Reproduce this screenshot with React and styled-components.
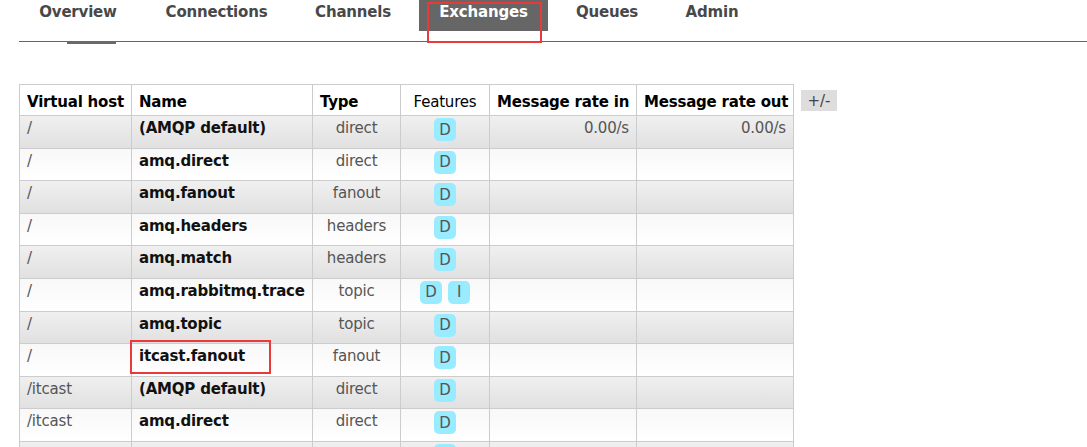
import { createGlobalStyle, styled } from "styled-components";

const GlobalStyle = createGlobalStyle`
    html, body {
        margin: 0;
        padding: 0;
        background: #fff;
        overflow: hidden;
    }
    body {
        font-family: "DejaVu Sans", Verdana, sans-serif;
        font-size: 15px;
        color: #484848;
    }
`

const Page = styled.div`
    width: 1087px;
`
const TabBar = styled.ul`
    display: flex;
    gap: 9px;
    list-style: none;
    margin: 0;
    padding: 0 0 0 19px;
    height: 41px;
`
const Tab = styled.li`
    position: relative;
    box-sizing: border-box;
    width: ${props => props.$width}px;
    height: 31px;
    display: flex;
    justify-content: center;
    padding-top: 3px;
    font-weight: bold;
    font-size: 15px;
    color: ${props => props.$active ? "#fff" : "#484848"};
    background: ${props => props.$active ? "#666" : "transparent"};
    letter-spacing: -0.2px;
`
const Highlight = styled.div`
    position: absolute;
    left: ${props => props.$left}px;
    top: ${props => props.$top}px;
    width: ${props => props.$width}px;
    height: ${props => props.$height}px;
    box-sizing: border-box;
    border: 2px solid #e83a3a;
    pointer-events: none;
`
const Rule = styled.div`
    margin-left: 19px;
    border-top: 1px solid #666;
`
const Marker = styled.div`
    margin: -1px 0 0 67px;
    width: 49px;
    height: 3px;
    background: #6a6a6a;
`
const Section = styled.div`
    display: flex;
    align-items: flex-start;
    gap: 7px;
    padding: 40px 0 0 19px;
`
const Table = styled.table`
    border-collapse: collapse;
    table-layout: fixed;
    width: 774px;
`
const HeadCell = styled.th`
    box-sizing: border-box;
    height: 31px;
    padding: 4px 7px 0 7px;
    border: 1px solid #ccc;
    background: #fff;
    color: #000;
    text-align: ${props => props.$align || "left"};
    font-weight: ${props => props.$plain ? "normal" : "bold"};
    font-size: 15px;
    white-space: nowrap;
    letter-spacing: -0.2px;
`
const Row = styled.tr`
    height: 32.6px;
    background: ${props => props.$alt
        ? "linear-gradient(#f0f0f0, #e0e0e0)"
        : "linear-gradient(#f8f8f8, #fff)"};
`
const Cell = styled.td`
    position: relative;
    box-sizing: border-box;
    padding: 2px 7px 0 7px;
    border: 1px solid #ccc;
    vertical-align: top;
    text-align: ${props => props.$align || "left"};
    color: ${props => props.$strong ? "#111" : "#555"};
    font-weight: ${props => props.$strong ? "bold" : "normal"};
    white-space: nowrap;
    line-height: 20px;
    letter-spacing: -0.2px;
`
const Features = styled.div`
    display: flex;
    justify-content: center;
    gap: 6px;
`
const Badge = styled.span`
    display: inline-flex;
    align-items: center;
    justify-content: center;
    min-width: 16px;
    height: 23px;
    padding: 0 3px;
    border-radius: 5px;
    background: #99ebff;
    color: #555;
    font-size: 15px;
`
const Toggle = styled.button`
    margin-top: 6px;
    width: 36px;
    height: 21px;
    padding: 0;
    border: none;
    background: #ddd;
    color: #444;
    font-family: inherit;
    font-size: 15px;
`

const tabs = [
    { label: "Overview", width: 118 },
    { label: "Connections", width: 141 },
    { label: "Channels", width: 114 },
    { label: "Exchanges", width: 129, active: true },
    { label: "Queues", width: 100 },
    { label: "Admin", width: 92 },
]

const exchanges = [
    { vhost: "/", name: "(AMQP default)", type: "direct", features: ["D"], rateIn: "0.00/s", rateOut: "0.00/s" },
    { vhost: "/", name: "amq.direct", type: "direct", features: ["D"] },
    { vhost: "/", name: "amq.fanout", type: "fanout", features: ["D"] },
    { vhost: "/", name: "amq.headers", type: "headers", features: ["D"] },
    { vhost: "/", name: "amq.match", type: "headers", features: ["D"] },
    { vhost: "/", name: "amq.rabbitmq.trace", type: "topic", features: ["D", "I"] },
    { vhost: "/", name: "amq.topic", type: "topic", features: ["D"] },
    { vhost: "/", name: "itcast.fanout", type: "fanout", features: ["D"], marked: true },
    { vhost: "/itcast", name: "(AMQP default)", type: "direct", features: ["D"] },
    { vhost: "/itcast", name: "amq.direct", type: "direct", features: ["D"] },
    { vhost: "/itcast", name: "amq.fanout", type: "fanout", features: ["D"] },
]

function App() {
    return <Page>
        <GlobalStyle />
        <TabBar>
            {tabs.map(tab => <Tab key={tab.label} $width={tab.width} $active={tab.active}>
                {tab.label}
                {tab.active && <Highlight $left={8} $top={2} $width={115} $height={41} />}
            </Tab>)}
        </TabBar>
        <Rule />
        <Marker />
        <Section>
            <Table>
                <colgroup>
                    <col style={{ width: 112 }} />
                    <col style={{ width: 181 }} />
                    <col style={{ width: 88 }} />
                    <col style={{ width: 89 }} />
                    <col style={{ width: 147 }} />
                    <col style={{ width: 157 }} />
                </colgroup>
                <thead>
                    <tr>
                        <HeadCell>Virtual host</HeadCell>
                        <HeadCell>Name</HeadCell>
                        <HeadCell>Type</HeadCell>
                        <HeadCell $plain $align="center">Features</HeadCell>
                        <HeadCell>Message rate in</HeadCell>
                        <HeadCell>Message rate out</HeadCell>
                    </tr>
                </thead>
                <tbody>
                    {exchanges.map((ex, i) => <Row key={i} $alt={i % 2 === 0}>
                        <Cell>{ex.vhost}</Cell>
                        <Cell $strong>
                            {ex.name}
                            {ex.marked && <Highlight $left={-2} $top={-4} $width={141} $height={34} />}
                        </Cell>
                        <Cell $align="center">{ex.type}</Cell>
                        <Cell>
                            <Features>
                                {ex.features.map(f => <Badge key={f}>{f}</Badge>)}
                            </Features>
                        </Cell>
                        <Cell $align="right">{ex.rateIn}</Cell>
                        <Cell $align="right">{ex.rateOut}</Cell>
                    </Row>)}
                </tbody>
            </Table>
            <Toggle>+/-</Toggle>
        </Section>
    </Page>
}

export default App;
